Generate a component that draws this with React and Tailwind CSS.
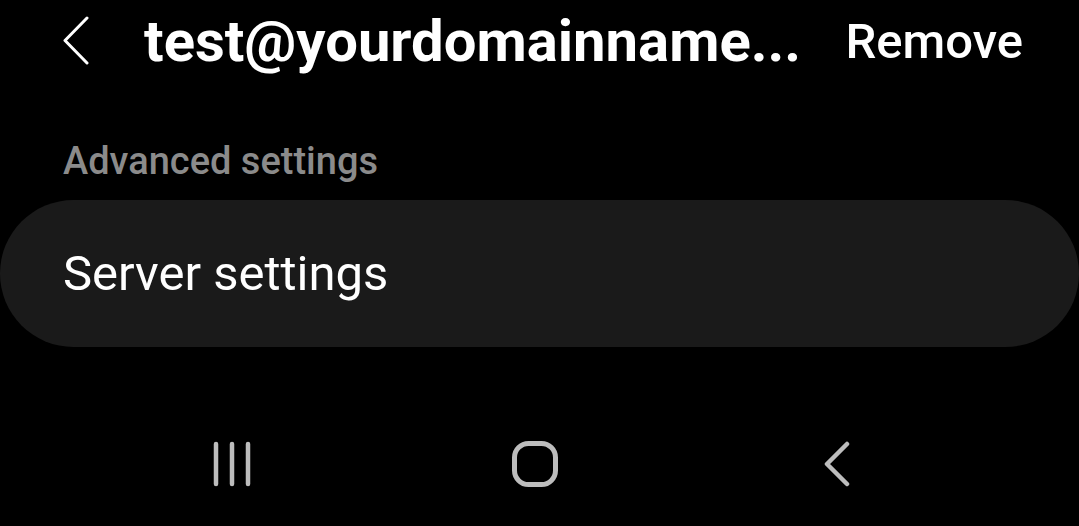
import React from "react";

function BackChevron() {
  return (
    <svg width="30" height="50" viewBox="0 0 30 50" className="shrink-0">
      <path d="M25 2 L3 24.5 L25 47" fill="none" stroke="#ffffff" strokeWidth="3" strokeLinecap="round" strokeLinejoin="round" />
    </svg>
  );
}

function RecentsIcon() {
  return (
    <svg width="44" height="46" viewBox="0 0 44 46">
      <g stroke="#bdbdbd" strokeWidth="4.5" strokeLinecap="round">
        <line x1="5" y1="3" x2="5" y2="43" />
        <line x1="21" y1="3" x2="21" y2="43" />
        <line x1="37" y1="3" x2="37" y2="43" />
      </g>
    </svg>
  );
}

function HomeIcon() {
  return (
    <svg width="48" height="48" viewBox="0 0 48 48">
      <rect x="3.5" y="3.5" width="41" height="41" rx="14" fill="none" stroke="#bdbdbd" strokeWidth="5" />
    </svg>
  );
}

function NavBackIcon() {
  return (
    <svg width="30" height="46" viewBox="0 0 30 46">
      <path d="M25 3 L5 23 L25 43" fill="none" stroke="#bdbdbd" strokeWidth="4.5" strokeLinecap="round" strokeLinejoin="round" />
    </svg>
  );
}

export default function App() {
  return (
    <div
      className="w-full h-[526px] bg-black text-white overflow-hidden flex flex-col"
      style={{ fontFamily: "Roboto, 'Noto Sans', sans-serif" }}
    >
      {/* header */}
      <div className="flex items-center h-[82px] pl-[62px] pr-[56px]">
        <BackChevron />
        <h1 className="ml-[52px] text-[58px] font-bold whitespace-nowrap leading-none">
          test@yourdomainname...
        </h1>
        <button className="ml-auto text-[49px] font-medium leading-none">Remove</button>
      </div>

      {/* section */}
      <div className="pl-[63px] mt-[60px] text-[38px] font-medium text-[#8b8b8b] leading-none">
        Advanced settings
      </div>

      <div className="mt-[20px] h-[147px] rounded-full bg-[#1a1a1a] flex items-center px-[63px]">
        <span className="text-[49px] leading-none text-white">Server settings</span>
      </div>

      {/* nav bar */}
      <div className="mt-auto mb-[38px] flex items-center pl-[183px] gap-[202px]">
        <div className="w-[100px] flex justify-center"><RecentsIcon /></div>
        <div className="w-[100px] flex justify-center"><HomeIcon /></div>
        <div className="w-[100px] flex justify-center"><NavBackIcon /></div>
      </div>
    </div>
  );
}
